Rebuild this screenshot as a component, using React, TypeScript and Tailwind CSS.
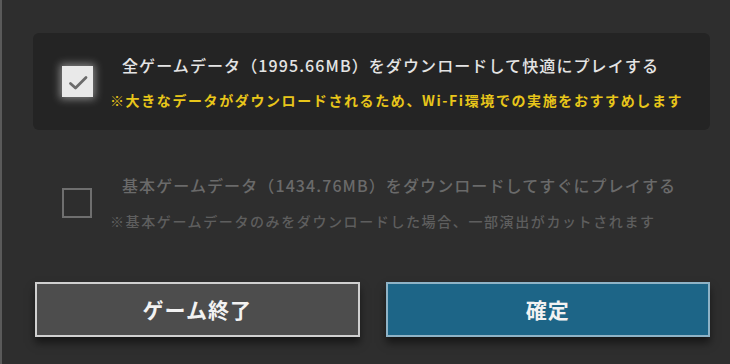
import React from "react";

const FONT = { fontFamily: '"Noto Sans CJK JP", "Noto Sans", sans-serif' };

function CheckedBox() {
  return (
    <div className="flex h-[31px] w-[31px] shrink-0 items-center justify-center bg-[#e9e9e9] shadow-[0_0_8px_2px_rgba(255,255,255,0.45)]">
      <svg width="22" height="22" viewBox="0 0 22 22" fill="none">
        <path d="M3.5 12.5 L8.5 17 L19 6.5" stroke="#6b6b6b" strokeWidth="2.8" strokeLinecap="round" strokeLinejoin="round" />
      </svg>
    </div>
  );
}

function EmptyBox() {
  return <div className="h-[30px] w-[30px] shrink-0 border-[2px] border-[#6f6f6f]" />;
}

export default function App() {
  return (
    <div
      className="flex h-[364px] w-[730px] flex-col border-l-[2px] border-[#5a5a5a] bg-[#2e2e2e] pl-[31px] pr-[20px] pt-[33px]"
      style={FONT}
    >
      {/* selected option */}
      <div className="flex h-[97px] items-center rounded-[6px] bg-[#242424] pl-[29px]">
        <CheckedBox />
        <div className="ml-[17px] flex flex-col">
          <div className="pl-[12px] text-[16px] font-medium leading-[20px] tracking-[1.1px] text-[#e4e4e4]">
            全ゲームデータ（1995.66MB）をダウンロードして快適にプレイする
          </div>
          <div className="mt-[16px] text-[14px] font-bold leading-[18px] tracking-[1.6px] text-[#e8c61a]">
            ※大きなデータがダウンロードされるため、Wi-Fi環境での実施をおすすめします
          </div>
        </div>
      </div>

      {/* unselected option */}
      <div className="mt-[24px] flex h-[97px] items-center rounded-[6px] pl-[29px]">
        <EmptyBox />
        <div className="ml-[18px] flex flex-col">
          <div className="pl-[12px] text-[16px] font-medium leading-[20px] tracking-[1.1px] text-[#6a6a6a]">
            基本ゲームデータ（1434.76MB）をダウンロードしてすぐにプレイする
          </div>
          <div className="mt-[17px] text-[14px] font-medium leading-[18px] tracking-[1.6px] text-[#5e5e5e]">
            ※基本ゲームデータのみをダウンロードした場合、一部演出がカットされます
          </div>
        </div>
      </div>

      {/* buttons */}
      <div className="mt-[31px] flex gap-[26px] pl-[2px]">
        <button className="flex h-[55px] w-[325px] items-center justify-center border-[2px] border-[#d0d0d0] bg-[#4d4d4d] text-[21px] font-bold tracking-[1px] text-[#f2f2f2] shadow-[0_6px_8px_rgba(0,0,0,0.5)]">
          ゲーム終了
        </button>
        <button className="flex h-[55px] w-[325px] items-center justify-center border-[2px] border-[#8fb3c6] bg-[#1d6587] text-[21px] font-bold tracking-[1px] text-[#f2f2f2] shadow-[0_6px_8px_rgba(0,0,0,0.5)]">
          確定
        </button>
      </div>
    </div>
  );
}
